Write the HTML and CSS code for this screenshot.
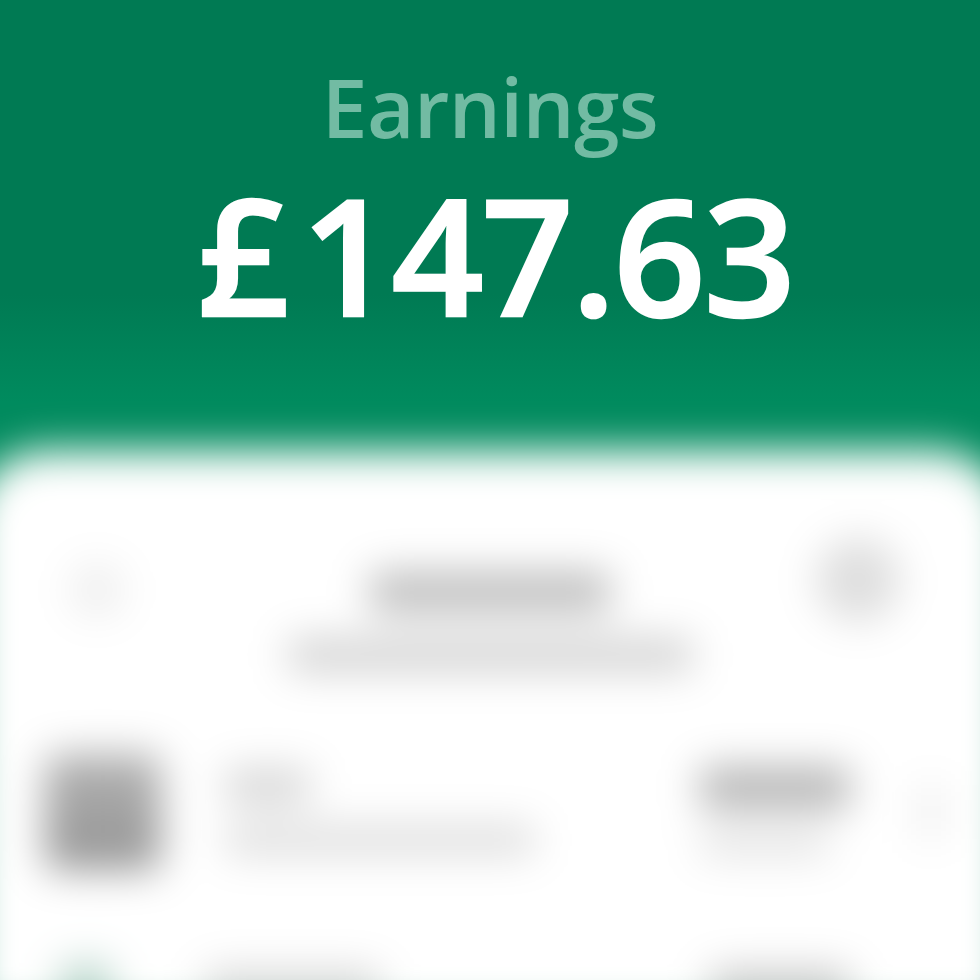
FILE: index.html
```html
<!DOCTYPE html>
<html lang="en">
<head>
  <meta charset="UTF-8" />
  <meta name="viewport" content="width=device-width, initial-scale=1.0"/>
  <title>Earnings</title>
  <link rel="stylesheet" href="styles.css">
</head>
<body>

  <div class="header">
    <div class="label">Earnings</div>
    <div class="amount"><span class="currency">£</span>147.63</div>
  </div>

  <div class="sheet">
    <div class="sheet-top">
      <div class="nav-icon faint"></div>
      <div class="sheet-title">
        <div class="blob title-blob"></div>
        <div class="blob sub-blob"></div>
      </div>
      <div class="nav-icon"></div>
    </div>

    <div class="row">
      <div class="thumb"></div>
      <div class="row-text">
        <div class="blob name-blob"></div>
        <div class="blob desc-blob"></div>
      </div>
      <div class="row-value">
        <div class="blob value-blob"></div>
        <div class="blob note-blob"></div>
      </div>
      <div class="chevron"></div>
    </div>

    <div class="row next">
      <div class="thumb small"></div>
      <div class="row-text">
        <div class="blob next-name"></div>
      </div>
      <div class="row-value">
        <div class="blob next-value"></div>
      </div>
      <div class="chevron hidden"></div>
    </div>
  </div>

</body>
</html>
```

FILE: styles.css
```css
html, body {
  height: 100%;
  overflow: hidden;
}
body {
  margin: 0;
  font-family: 'Open Sans', 'Noto Sans', sans-serif;
  background: linear-gradient(#007a53 0%, #007a53 30%, #008b5e 41%);
  display: flex;
  flex-direction: column;
}
.header {
  height: 450px;
  flex: none;
  display: flex;
  flex-direction: column;
  align-items: center;
  text-align: center;
}
.label {
  margin-top: 59px;
  font-size: 82px;
  line-height: 94px;
  font-weight: 600;
  letter-spacing: -0.6px;
  color: #72bba3;
}
.amount {
  margin-top: 26px;
  padding-left: 11px;
  font-size: 161px;
  line-height: 150px;
  font-weight: 600;
  letter-spacing: -2px;
  color: #fff;
  -webkit-text-stroke: 2.5px #fff;
}
.currency {
  margin-right: 14px;
}
.sheet {
  flex: 1;
  margin: 0 -30px;
  padding: 0 72px;
  background: #fff;
  border-radius: 76px 76px 0 0;
  filter: blur(20px);
}
.sheet-top {
  display: flex;
  align-items: flex-start;
  justify-content: space-between;
  padding-top: 122px;
}
.nav-icon {
  width: 84px;
  height: 84px;
  margin-top: -34px;
  margin-right: 38px;
  border-radius: 50%;
  background: #dedede;
}
.nav-icon.faint {
  width: 54px;
  height: 54px;
  margin: -9px 0 0 28px;
  background: #eeeeee;
}
.sheet-title {
  display: flex;
  flex-direction: column;
  align-items: center;
  gap: 26px;
  margin-left: 40px;
}
.blob {
  border-radius: 8px;
  background: #d4d4d4;
}
.title-blob {
  width: 240px;
  height: 40px;
  background: #bcbcbc;
}
.sub-blob {
  width: 405px;
  height: 34px;
  background: #d2d2d2;
}
.row {
  display: flex;
  align-items: center;
  margin-top: 82px;
}
.thumb {
  width: 116px;
  height: 116px;
  flex: none;
  margin-left: 3px;
  border-radius: 14px;
  background: linear-gradient(#b2b2b2, #939393);
}
.thumb.small {
  width: 52px;
  height: 52px;
  margin-left: 18px;
  margin-right: 0;
  background: #b9d5cb;
}
.row-text {
  flex: 1;
  margin-left: 64px;
  display: flex;
  flex-direction: column;
  gap: 22px;
}
.thumb.small + .row-text {
  margin-left: 93px;
}
.name-blob {
  width: 85px;
  height: 34px;
}
.desc-blob {
  width: 310px;
  height: 30px;
  background: #dcdcdc;
}
.row-value {
  width: 194px;
  display: flex;
  flex-direction: column;
  gap: 22px;
}
.value-blob {
  width: 150px;
  height: 42px;
  background: #b4b4b4;
}
.note-blob {
  width: 130px;
  height: 26px;
  background: #e2e2e2;
}
.chevron {
  width: 26px;
  height: 54px;
  margin-left: 24px;
  margin-right: -6px;
  background: #eeeeee;
}
.chevron.hidden {
  background: none;
}
.next {
  margin-top: 92px;
}
.next-name {
  width: 175px;
  height: 38px;
  background: #d8d8d8;
}
.next-value {
  width: 140px;
  height: 38px;
  margin-left: 10px;
  background: #c8c8c8;
}
```
